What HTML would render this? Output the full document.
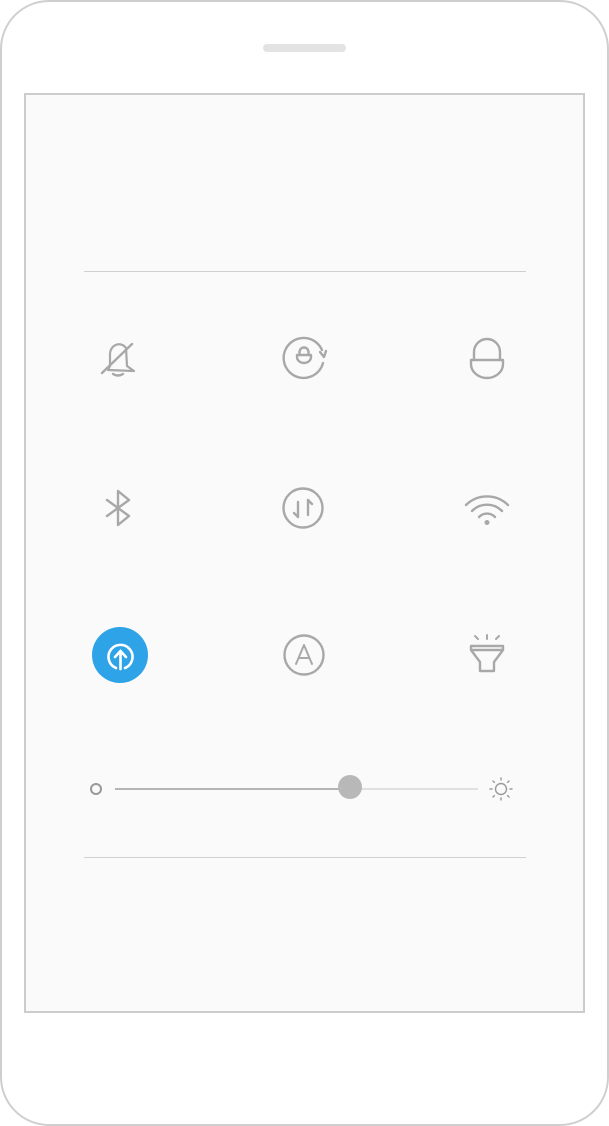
<!DOCTYPE html>
<html><head><style>html,body{margin:0;padding:0;background:#fff}svg{display:block}</style></head><body>
<svg width="609" height="1126" viewBox="0 0 609 1126" xmlns="http://www.w3.org/2000/svg">
<rect x="1" y="1" width="607" height="1124" rx="48" fill="#fff" stroke="#cfcfcf" stroke-width="2"/>
<rect x="263" y="44" width="83" height="8" rx="4" fill="#e3e3e3"/>
<rect x="25" y="94" width="559" height="918" fill="#fafafa" stroke="#cccccc" stroke-width="2"/>
<line x1="84" y1="271.5" x2="526" y2="271.5" stroke="#d0d0d0"/>
<line x1="84" y1="857.5" x2="526" y2="857.5" stroke="#d0d0d0"/>
<g fill="none" stroke="#a8a8a8" stroke-width="2.4" stroke-linecap="round" stroke-linejoin="round">
<path d="M108 370 L110 366 L110 355 A9 10 0 0 1 126 348 L127 366 L134 371 Z" stroke-width="2.2"/>
<path d="M113 374 Q118 377 123 374"/>
<line x1="102" y1="373" x2="132" y2="344"/>
<path d="M323 363 A20 20 0 1 1 322 350"/>
<path d="M320 352 L324 357 L326 351"/>
<path d="M297 355 H311 V357 A7 6 0 0 1 297 357 Z"/>
<path d="M299.5 355 V352 A4.5 4.5 0 0 1 308.5 352 V355"/>
<path d="M474 360 V352 A13 13 0 0 1 500 352 V360"/>
<path d="M471 360 H503 V364 A16 14 0 0 1 471 364 Z"/>
<path d="M107 500 L129 516 L118 525 V491 L129 500 L107 516"/>
<circle cx="303" cy="508" r="19.5"/>
<path d="M298 502 V517 M294 513 L298 517" />
<path d="M308 515 V500 M308 500 L312 504"/>
<path d="M466 505 A30 30 0 0 1 508 505"/>
<path d="M472 511 A21 21 0 0 1 502 511"/>
<path d="M479 517 A11 11 0 0 1 495 517"/>
<circle cx="304" cy="655" r="19.5"/>
<path d="M296 664 L304 645 L312 664 M298.5 658 H309.5" stroke-width="2"/>
<path d="M471 646 H503 V650 L494 662 V671 H480 V662 L471 650 Z"/>
<line x1="471" y1="650" x2="503" y2="650"/>
<path d="M487 635 V639 M475 636 L478 639 M499 636 L496 639" stroke-width="2"/>
</g>
<circle cx="487" cy="522.5" r="2.5" fill="#a8a8a8"/>
<circle cx="120" cy="655" r="28" fill="#2ea3e8"/>
<g fill="none" stroke="#fff" stroke-width="2.6" stroke-linecap="round">
<path d="M116 668 A12 12 0 1 1 125 668"/>
<path d="M120.5 669 V652 M115 657 L120.5 651 L126 657"/>
</g>
<circle cx="96" cy="789" r="5" fill="none" stroke="#999" stroke-width="2"/>
<line x1="115" y1="789" x2="350" y2="789" stroke="#b5b5b5" stroke-width="2"/>
<line x1="350" y1="789" x2="478" y2="789" stroke="#e0e0e0" stroke-width="2"/>
<circle cx="350" cy="787" r="12" fill="#b8b8b8"/>
<g stroke="#9a9a9a" stroke-width="1.4" fill="none" stroke-linecap="round">
<circle cx="501" cy="789" r="5.5"/>
<path d="M501 778v2M501 798v2M490 789h2M510 789h2M493 781l1.4 1.4M507.6 795.6l1.4 1.4M493 797l1.4-1.4M507.6 782.4l1.4-1.4"/>
</g>
</svg>
</body></html>
